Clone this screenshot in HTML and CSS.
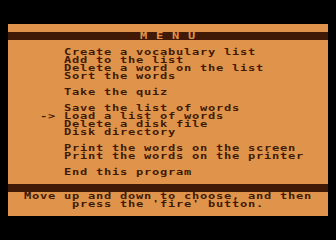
FILE: index.html
```html
<!DOCTYPE html>
<html lang="en">
<head>
  <meta charset="UTF-8">
  <title>Menu</title>
  <link rel="stylesheet" href="styles.css">
</head>
<body>
  <div class="screen">
    <div class="band">
      <div class="txt title">M E N U</div>
    </div>
    <div class="txt menu">       Create a vocabulary list
       Add to the list
       Delete a word on the list
       Sort the words

       Take the quiz

       Save the list of words
    -> Load a list of words
       Delete a disk file
       Disk directory

       Print the words on the screen
       Print the words on the printer

       End this program</div>
    <div class="band"></div>
    <div class="txt help">Move up and down to choose, and then
press the 'fire' button.</div>
  </div>
</body>
</html>
```

FILE: styles.css
```css
body {
  margin: 0;
  background-color: #000;
}
.screen {
  margin: 24px 0 0 8px;
  width: 320px;
  height: 192px;
  padding-top: 8px;
  box-sizing: border-box;
  background-color: #e0934a;
  color: #401a06;
}
.band {
  height: 8px;
  background-color: #401a06;
}
/* 8x8 character cells: 6px advance stretched to 8px */
.txt {
  font-family: "DejaVu Sans Mono", monospace;
  font-weight: bold;
  font-size: 9px;
  line-height: 8px;
  letter-spacing: 0.58px;
  white-space: pre;
  width: 240px;
  transform: scaleX(1.3333);
  transform-origin: 0 0;
}
.title {
  color: #e0934a;
  text-align: center;
}
.menu {
  margin: 8px 0;
  height: 128px;
}
.help {
  text-align: center;
}
```
